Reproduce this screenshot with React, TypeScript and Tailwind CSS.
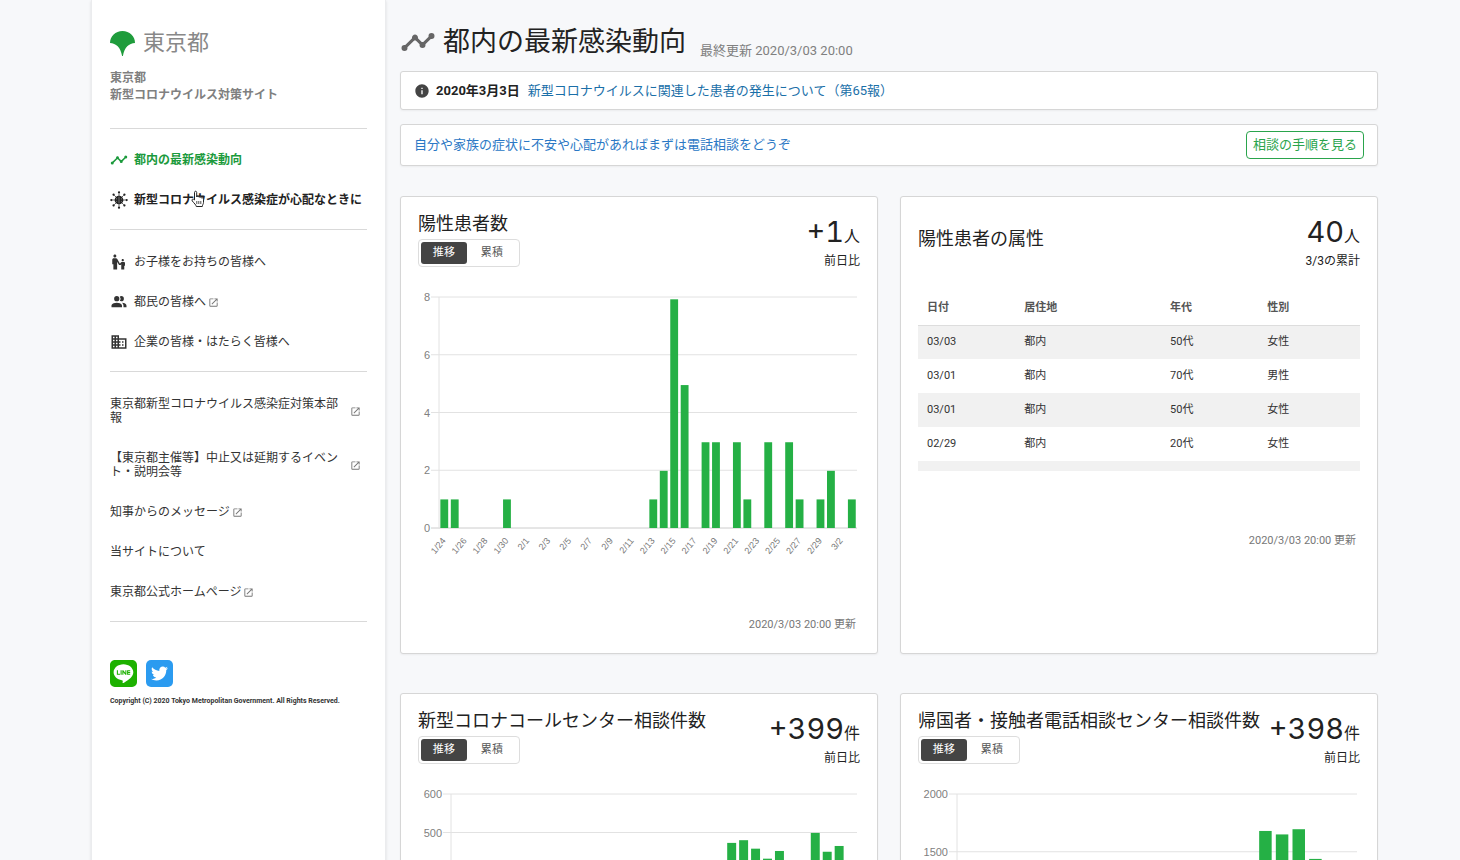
import type { ReactNode } from "react";
import { MdEscalatorWarning, MdDomain, MdInfo, MdOpenInNew } from "react-icons/md";
import { FaLine, FaTwitter } from "react-icons/fa";

const NUMBER_FONT = "font-['Inter','Noto_Sans_CJK_JP',sans-serif]";

const TimelineIcon = ({ className }: { className?: string }) => (
  <svg viewBox="0 0 24 24" fill="currentColor" className={className} aria-hidden="true">
    <path d="M3,14L3.5,14.07L8.07,9.5C7.89,8.85 8.06,8.11 8.59,7.59C9.37,6.8 10.63,6.8 11.41,7.59C11.94,8.11 12.11,8.85 11.93,9.5L14.5,12.07L15,12C15.18,12 15.35,12 15.5,12.07L19.07,8.5C19,8.35 19,8.18 19,8A2,2 0 0,1 21,6A2,2 0 0,1 23,8A2,2 0 0,1 21,10C20.82,10 20.65,10 20.5,9.93L16.93,13.5C17,13.65 17,13.82 17,14A2,2 0 0,1 15,16A2,2 0 0,1 13,14L13.07,13.5L10.5,10.93C10.18,11 9.82,11 9.5,10.93L4.93,15.5L5,16A2,2 0 0,1 3,18A2,2 0 0,1 1,16A2,2 0 0,1 3,14Z" />
  </svg>
);

const PeopleIcon = ({ className }: { className?: string }) => (
  <svg viewBox="0 0 24 24" fill="currentColor" className={className} aria-hidden="true">
    <path d="M16 17V19H2V17S2 13 9 13 16 17 16 17M12.5 7.5A3.5 3.5 0 1 0 9 11A3.5 3.5 0 0 0 12.5 7.5M15.94 13A5.32 5.32 0 0 1 18 17V19H22V17S22 13.37 15.94 13M15 4A3.39 3.39 0 0 0 13.07 4.59A5 5 0 0 1 13.07 10.41A3.39 3.39 0 0 0 15 11A3.5 3.5 0 0 0 15 4Z" />
  </svg>
);

const VirusIcon = ({ className }: { className?: string }) => (
  <svg viewBox="0 0 24 24" className={className} aria-hidden="true">
    {[0, 45, 90, 135, 180, 225, 270, 315].map((deg) => (
      <g key={deg} transform={`rotate(${deg} 12 12)`}>
        <path d="M12 7V3" stroke="currentColor" strokeWidth="0.9" />
        <circle cx="12" cy="1.8" r="1.5" fill="currentColor" />
      </g>
    ))}
    <circle cx="12" cy="12" r="5.8" fill="currentColor" />
    <path d="M12 7.5V16.5M8.8 9.5V11.3M15.2 9.5V11.3M8.8 13.2V14.5M15.2 13.2V14.5" stroke="#fff" strokeWidth="0.7" opacity="0.7" />
  </svg>
);

const GinkgoMark = () => (
  <svg viewBox="0 0 25 25" className="size-[25px]" aria-hidden="true">
    <path d="M0 12C0 5 5.5 0 12.5 0S25 5 25 12C19 12.5 14.5 16 12.9 25H12.1C10.5 16 6 12.5 0 12Z" fill="#1f9c3c" />
  </svg>
);

const HandCursor = () => (
  <svg viewBox="0 0 16 18" className="pointer-events-none absolute left-20 top-[61px] h-[18px] w-4" aria-hidden="true">
    <path
      d="M4.5 9V2.500C4.5 .8 6.700.8 6.700 2.500V7C6.900 6 8.800 6 9 7.300C9.500 6.500 11.100 6.700 11.300 8C12 7.300 13.500 7.800 13.500 9.300V12.500C13.500 14 12.500 14.600 12.300 16.500H6.300C6 14.800 4.300 13.500 2.300 11C1.300 9.400 2.800 8.300 4.500 9.900Z"
      fill="#fff"
      stroke="#222"
      strokeWidth="1"
    />
    <path d="M6.8 11v3M8.800 11v3M10.800 11v3" stroke="#222" strokeWidth="0.8" />
  </svg>
);

type NavItemProps = {
  icon?: ReactNode;
  label: string;
  external?: boolean;
  stretch?: boolean;
  tone?: "normal" | "active" | "strong";
};

const tones = {
  normal: "text-[#333333]",
  active: "font-bold text-[#1b9a3c]",
  strong: "font-bold text-[#222222]",
};

const NavItem = ({ icon, label, external, stretch, tone = "normal" }: NavItemProps) => (
  <li>
    <a href="#" className={`flex items-center py-[13px] text-[12px] leading-[14px] ${tones[tone]}`}>
      {icon && <span className="mr-1.5 flex h-3.5 shrink-0 items-center">{icon}</span>}
      <span className={stretch ? "mr-2 flex-1" : ""}>{label}</span>
      {external && <MdOpenInNew className={`size-[11px] shrink-0 text-[#777777] ${stretch ? "mr-1.5" : "ml-0.5"}`} />}
    </a>
  </li>
);

const Sidebar = () => (
  <aside className="w-[295px] shrink-0 border-x border-[#ebecee] bg-white px-[18px] shadow-sm">
    <header className="pt-[30px]">
      <a href="#" className="flex items-center gap-2 text-[22px] leading-[26px] text-[#888888]">
        <GinkgoMark />
        東京都
      </a>
      <h1 className="mt-3.5 pb-6 text-[12px] font-bold leading-[17px] text-[#808080]">
        東京都
        <br />
        新型コロナウイルス対策サイト
      </h1>
    </header>
    <nav>
      <div className="relative border-t border-[#d9d9d9] pt-[11px] pb-[9px]">
        <ul>
          <NavItem icon={<TimelineIcon className="size-[18px]" />} label="都内の最新感染動向" tone="active" />
          <NavItem icon={<VirusIcon className="size-[18px]" />} label="新型コロナウイルス感染症が心配なときに" tone="strong" />
        </ul>
        <HandCursor />
      </div>
      <ul className="border-t border-[#d9d9d9] pt-3 pb-[9px]">
        <NavItem icon={<MdEscalatorWarning className="size-[18px]" />} label="お子様をお持ちの皆様へ" />
        <NavItem icon={<PeopleIcon className="size-[18px]" />} label="都民の皆様へ" external />
        <NavItem icon={<MdDomain className="size-[18px]" />} label="企業の皆様・はたらく皆様へ" />
      </ul>
      <ul className="border-y border-[#d9d9d9] pt-3 pb-[9px]">
        <NavItem label="東京都新型コロナウイルス感染症対策本部報" external stretch />
        <NavItem label="【東京都主催等】中止又は延期するイベント・説明会等" external stretch />
        <NavItem label="知事からのメッセージ" external />
        <NavItem label="当サイトについて" />
        <NavItem label="東京都公式ホームページ" external />
      </ul>
    </nav>
    <footer className="pt-9">
      <div className="flex items-center gap-[9px]">
        <a href="#" aria-label="LINE">
          <FaLine className="h-[31px] w-[27px] text-[#1db100]" />
        </a>
        <a href="#" aria-label="Twitter" className="flex size-[27px] items-center justify-center rounded-[5px] bg-[#2b9bf0]">
          <FaTwitter className="size-[17px] text-white" />
        </a>
      </div>
      <small className="mt-1.5 block whitespace-nowrap text-[7px] font-bold leading-3 text-[#333333]">
        Copyright (C) 2020 Tokyo Metropolitan Government. All Rights Reserved.
      </small>
    </footer>
  </aside>
);

type ChartProps = {
  title: string;
  values: number[];
  max: number;
  step: number;
  axisX: number;
  start?: [number, number];
};

const PLOT_TOP = 11;
const PLOT_HEIGHT = 231;
const PLOT_RIGHT = 439;

const dayLabel = ([month, day]: [number, number], offset: number) => {
  const d = new Date(2020, month - 1, day + offset);
  return `${d.getMonth() + 1}/${d.getDate()}`;
};

const BarChart = ({ title, values, max, step, axisX, start }: ChartProps) => {
  const pitch = (PLOT_RIGHT - axisX) / values.length;
  const bottom = PLOT_TOP + PLOT_HEIGHT;
  const ticks = Array.from({ length: max / step + 1 }, (_, i) => i * step);

  return (
    <svg viewBox="0 0 442 290" className="block w-full font-['Liberation_Sans','Arial',sans-serif]" role="img" aria-label={title}>
      {ticks.map((tick) => {
        const y = bottom - (tick / max) * PLOT_HEIGHT;
        return (
          <g key={tick}>
            <line x1={axisX - 8} x2={PLOT_RIGHT} y1={y} y2={y} stroke={tick === 0 ? "#cccccc" : "#e2e2e2"} />
            <text x={axisX - 9} y={y + 4} textAnchor="end" fontSize="11" fill="#808080">
              {tick}
            </text>
          </g>
        );
      })}
      <line x1={axisX} x2={axisX} y1={PLOT_TOP} y2={bottom + 1} stroke="#e2e2e2" />
      {values.map((value, i) => {
        const height = (value / max) * PLOT_HEIGHT;
        return <rect key={i} x={axisX + pitch * (i + 0.13)} y={bottom - height} width={pitch * 0.75} height={height} fill="#25b045" />;
      })}
      {start &&
        values.map((_, i) => {
          if (i % 2) return null;
          const x = axisX + pitch * (i + 0.5) + 2;
          return (
            <text key={i} x={x} y={bottom + 13} transform={`rotate(-50 ${x} ${bottom + 13})`} textAnchor="end" fontSize="9" fill="#777777">
              {dayLabel(start, i)}
            </text>
          );
        })}
    </svg>
  );
};

type CardProps = {
  title: string;
  total: string;
  unit: string;
  note: string;
  toggle?: boolean;
  children: ReactNode;
};

const Card = ({ title, total, unit, note, toggle, children }: CardProps) => (
  <section className="min-w-0 rounded-[3px] border border-[#d6d6d6] bg-white px-[17px] pt-[15px] pb-5 shadow-xs">
    <header className={`flex h-[74px] justify-between ${toggle ? "items-start" : ""}`}>
      <div className={toggle ? "" : "pt-[15px]"}>
        <h3 className="whitespace-nowrap text-[18px] leading-6 text-[#222222]">{title}</h3>
        {toggle && (
          <div className="mt-[3px] inline-flex rounded border border-[#dddddd] p-0.5 text-[11px] leading-[22px]">
            <button type="button" className="w-[46px] rounded-[3px] bg-[#444444] tracking-wide text-white">
              推移
            </button>
            <button type="button" className="w-[50px] tracking-wide text-[#555555]">
              累積
            </button>
          </div>
        )}
      </div>
      <div className="whitespace-nowrap pt-1 text-right text-[#222222]">
        <p className={`text-[29px] leading-8 tabular-nums ${NUMBER_FONT}`}>
          {total}
          <span className="text-[16px]">{unit}</span>
        </p>
        <p className="mt-0.5 text-[12px] leading-[14px]">{note}</p>
      </div>
    </header>
    {children}
  </section>
);

const Updated = () => <p className="pr-1 text-right text-[11px] leading-4 text-[#777777]">2020/3/03 20:00 更新</p>;

const positives = [
  1, 1, 0, 0, 0, 0, 1, 0, 0, 0, 0, 0, 0, 0, 0, 0, 0, 0, 0, 0, 1, 2, 8, 5, 0, 3, 3, 0, 3, 1, 0, 3, 0, 3, 1, 0, 1, 2, 0, 1,
].map((n) => n * 0.99);

const callCenter = [
  86, 93, 120, 134, 150, 144, 131, 118, 109, 122, 140, 152, 139, 127, 160, 175, 188, 240, 262, 280, 301, 320, 352, 473, 480,
  458, 432, 452, 380, 372, 499, 450, 465, 390,
];

const consultations = [
  120, 140, 165, 190, 210, 260, 330, 410, 480, 560, 640, 710, 790, 860, 940, 1020, 1180, 1290, 1680, 1650, 1695, 1438, 1310,
  1240,
];

const patients = [
  ["03/03", "都内", "50代", "女性"],
  ["03/01", "都内", "70代", "男性"],
  ["03/01", "都内", "50代", "女性"],
  ["02/29", "都内", "20代", "女性"],
];

const PatientTable = () => (
  <div className="mt-[5px] h-[180px] overflow-hidden">
    <table className="w-full table-fixed text-left text-[11px] leading-4 text-[#333333]">
      <colgroup>
        <col className="w-[22%]" />
        <col className="w-[33%]" />
        <col className="w-[22%]" />
        <col />
      </colgroup>
      <thead className="text-[#555555]">
        <tr className="h-[34px] border-b border-[#dddddd]">
          {["日付", "居住地", "年代", "性別"].map((head) => (
            <th key={head} scope="col" className="px-[9px] font-bold">
              {head}
            </th>
          ))}
        </tr>
      </thead>
      <tbody>
        {patients.map((row, i) => (
          <tr key={i} className="h-[34px] odd:bg-[#f1f1f1]">
            {row.map((cell, j) => (
              <td key={j} className="px-[9px]">
                {cell}
              </td>
            ))}
          </tr>
        ))}
        <tr className="h-[34px] bg-[#f1f1f1]">
          <td colSpan={4} />
        </tr>
      </tbody>
    </table>
  </div>
);

const App = () => (
  <div className="flex min-h-screen bg-[#f7f8fa] pr-[82px] pl-[91px] font-['Roboto','Noto_Sans_CJK_JP',sans-serif]">
    <Sidebar />
    <main className="min-w-0 flex-1 pb-10 pl-3.5">
      <div className="flex items-end pt-[22px]">
        <TimelineIcon className="mb-0.5 size-9 text-[#666666]" />
        <h2 className="ml-[7px] text-[27px] leading-10 text-[#222222]">都内の最新感染動向</h2>
        <p className="ml-3.5 text-[13px] leading-[22px] text-[#808080]">最終更新 2020/3/03 20:00</p>
      </div>

      <div className="mt-[9px] flex items-center rounded-[3px] border border-[#d6d6d6] bg-white px-[13px] py-2 text-[13px] leading-[21px] shadow-xs">
        <MdInfo className="size-4 text-[#444444]" />
        <strong className="ml-1.5 text-[#222222]">2020年3月3日</strong>
        <a href="#" className="ml-2 text-[#1a6fa8]">
          新型コロナウイルスに関連した患者の発生について（第65報）
        </a>
      </div>

      <div className="mt-3.5 flex items-center justify-between rounded-[3px] border border-[#d6d6d6] bg-white px-[13px] py-1.5 text-[13px] shadow-xs">
        <a href="#" className="leading-5 text-[#2b78c5]">
          自分や家族の症状に不安や心配があればまずは電話相談をどうぞ
        </a>
        <a href="#" className="rounded border border-[#2aa44c] px-1.5 py-0.5 leading-[22px] text-[#2aa44c]">
          相談の手順を見る
        </a>
      </div>

      <div className="mt-[30px] grid grid-cols-2 gap-x-[22px] gap-y-[39px]">
        <Card title="陽性患者数" total="+1" unit="人" note="前日比" toggle>
          <BarChart title="陽性患者数" values={positives} max={8} step={2} axisX={21} start={[1, 24]} />
          <div className="pt-[41px]">
            <Updated />
          </div>
        </Card>
        <Card title="陽性患者の属性" total="40" unit="人" note="3/3の累計">
          <PatientTable />
          <div className="pt-[62px]">
            <Updated />
          </div>
        </Card>
        <Card title="新型コロナコールセンター相談件数" total="+399" unit="件" note="前日比" toggle>
          <BarChart title="新型コロナコールセンター相談件数" values={callCenter} max={600} step={100} axisX={33} />
        </Card>
        <Card title="帰国者・接触者電話相談センター相談件数" total="+398" unit="件" note="前日比" toggle>
          <BarChart title="帰国者・接触者電話相談センター相談件数" values={consultations} max={2000} step={500} axisX={39} />
        </Card>
      </div>
    </main>
  </div>
);

export default App;
